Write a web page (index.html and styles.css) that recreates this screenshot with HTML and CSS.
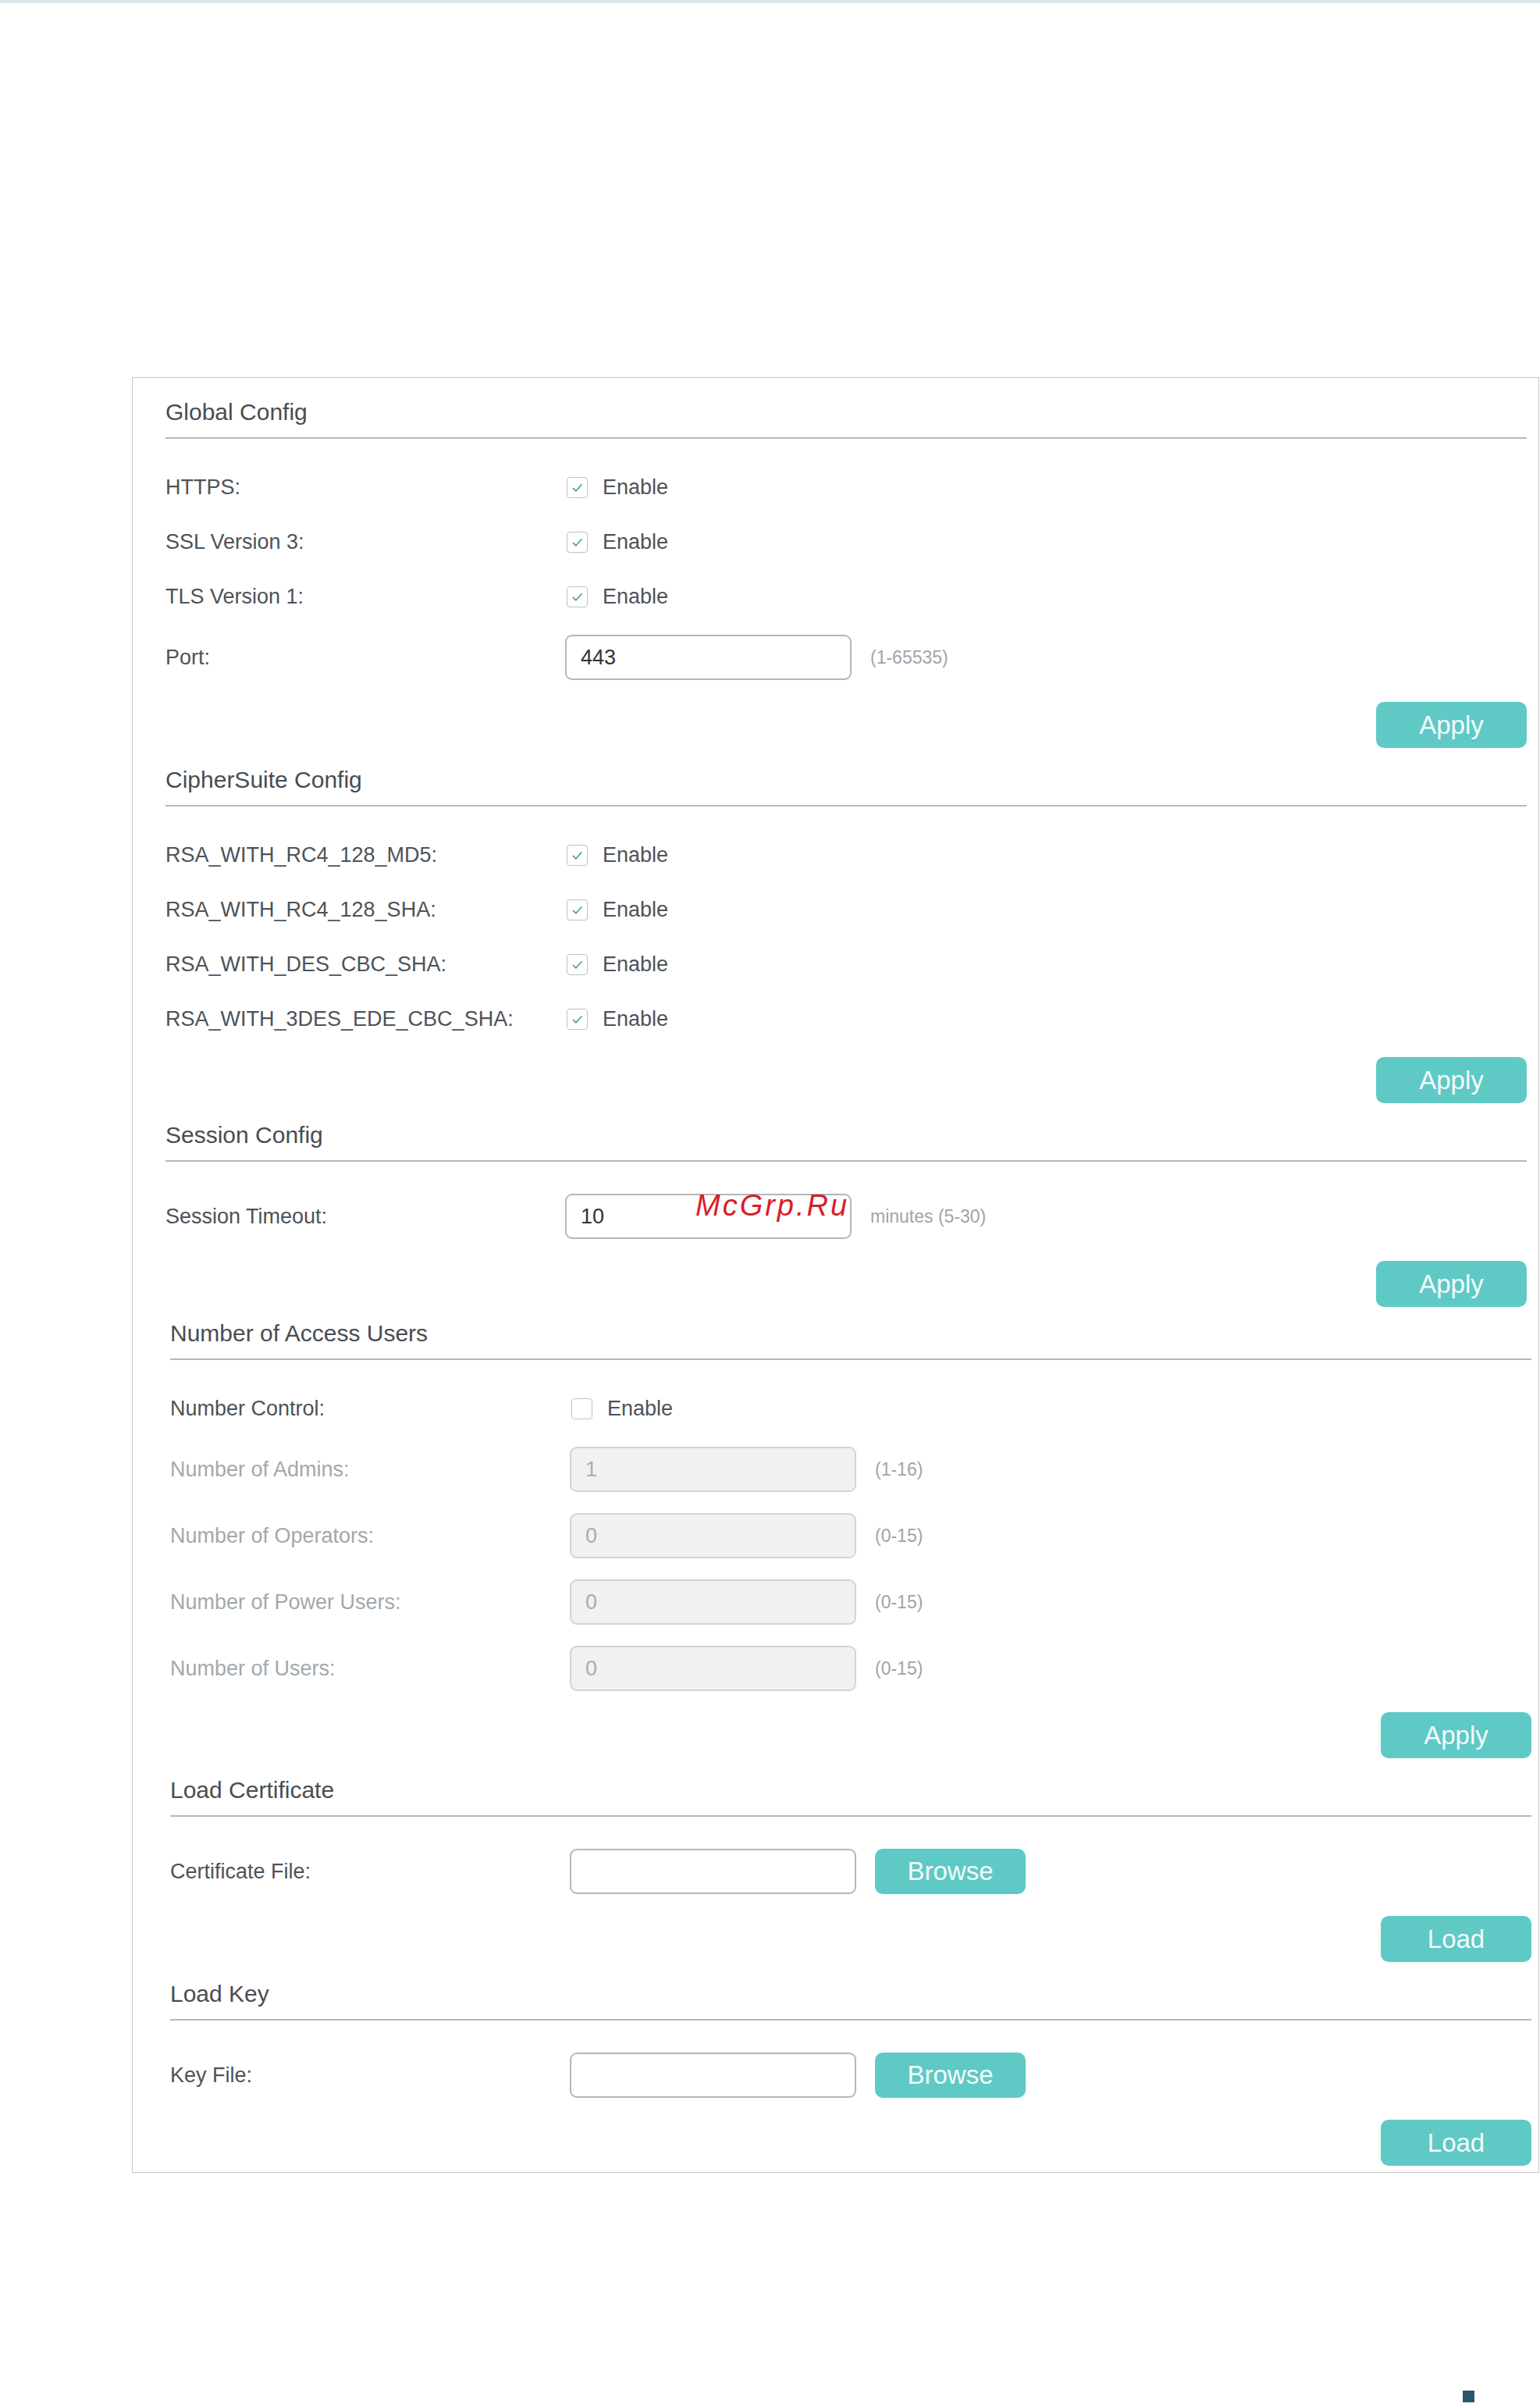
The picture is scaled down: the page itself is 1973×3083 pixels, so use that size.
FILE: index.html
```html
<!DOCTYPE html>
<html lang="en">
<head>
<meta charset="utf-8">
<title>HTTPS Config</title>
<link rel="stylesheet" href="styles.css">
</head>
<body>
<div class="topbar"></div>
<div class="page">
  <div class="panel">
    <div class="group">
      <section class="sec">
        <h2 class="sec-head">Global Config</h2>
        <div class="row row-check">
          <span class="label">HTTPS:</span>
          <span class="cb checked"><svg viewBox="0 0 27 27"><path d="M8 14.5 L11.8 18.2 L19.5 9.5"/></svg></span><span class="cb-text">Enable</span>
        </div>
        <div class="row row-check">
          <span class="label">SSL Version 3:</span>
          <span class="cb checked"><svg viewBox="0 0 27 27"><path d="M8 14.5 L11.8 18.2 L19.5 9.5"/></svg></span><span class="cb-text">Enable</span>
        </div>
        <div class="row row-check">
          <span class="label">TLS Version 1:</span>
          <span class="cb checked"><svg viewBox="0 0 27 27"><path d="M8 14.5 L11.8 18.2 L19.5 9.5"/></svg></span><span class="cb-text">Enable</span>
        </div>
        <div class="row">
          <span class="label">Port:</span>
          <span class="field">443</span><span class="hint">(1-65535)</span>
        </div>
        <div class="actions"><button class="btn">Apply</button></div>
      </section>

      <section class="sec">
        <h2 class="sec-head">CipherSuite Config</h2>
        <div class="row row-check">
          <span class="label">RSA_WITH_RC4_128_MD5:</span>
          <span class="cb checked"><svg viewBox="0 0 27 27"><path d="M8 14.5 L11.8 18.2 L19.5 9.5"/></svg></span><span class="cb-text">Enable</span>
        </div>
        <div class="row row-check">
          <span class="label">RSA_WITH_RC4_128_SHA:</span>
          <span class="cb checked"><svg viewBox="0 0 27 27"><path d="M8 14.5 L11.8 18.2 L19.5 9.5"/></svg></span><span class="cb-text">Enable</span>
        </div>
        <div class="row row-check">
          <span class="label">RSA_WITH_DES_CBC_SHA:</span>
          <span class="cb checked"><svg viewBox="0 0 27 27"><path d="M8 14.5 L11.8 18.2 L19.5 9.5"/></svg></span><span class="cb-text">Enable</span>
        </div>
        <div class="row row-check">
          <span class="label">RSA_WITH_3DES_EDE_CBC_SHA:</span>
          <span class="cb checked"><svg viewBox="0 0 27 27"><path d="M8 14.5 L11.8 18.2 L19.5 9.5"/></svg></span><span class="cb-text">Enable</span>
        </div>
        <div class="actions"><button class="btn">Apply</button></div>
      </section>

      <section class="sec">
        <h2 class="sec-head">Session Config</h2>
        <div class="row">
          <span class="label">Session Timeout:</span>
          <span class="field">10</span><span class="hint">minutes (5-30)</span>
        </div>
        <div class="actions"><button class="btn">Apply</button></div>
      </section>
    </div>

    <div class="group group-shift">
      <section class="sec">
        <h2 class="sec-head">Number of Access Users</h2>
        <div class="row row-check">
          <span class="label">Number Control:</span>
          <span class="cb"></span><span class="cb-text">Enable</span>
        </div>
        <div class="row row-disabled">
          <span class="label">Number of Admins:</span>
          <span class="field field-disabled">1</span><span class="hint">(1-16)</span>
        </div>
        <div class="row row-disabled">
          <span class="label">Number of Operators:</span>
          <span class="field field-disabled">0</span><span class="hint">(0-15)</span>
        </div>
        <div class="row row-disabled">
          <span class="label">Number of Power Users:</span>
          <span class="field field-disabled">0</span><span class="hint">(0-15)</span>
        </div>
        <div class="row row-disabled">
          <span class="label">Number of Users:</span>
          <span class="field field-disabled">0</span><span class="hint">(0-15)</span>
        </div>
        <div class="actions"><button class="btn">Apply</button></div>
      </section>

      <section class="sec">
        <h2 class="sec-head">Load Certificate</h2>
        <div class="row">
          <span class="label">Certificate File:</span>
          <span class="field"></span><button class="btn btn-browse">Browse</button>
        </div>
        <div class="actions"><button class="btn">Load</button></div>
      </section>

      <section class="sec sec-last">
        <h2 class="sec-head">Load Key</h2>
        <div class="row">
          <span class="label">Key File:</span>
          <span class="field"></span><button class="btn btn-browse">Browse</button>
        </div>
        <div class="actions"><button class="btn">Load</button></div>
      </section>
    </div>
  </div>

  <div class="watermark">McGrp.Ru</div>

  <div class="footer"><span class="footer-mark"></span></div>
</div>
</body>
</html>
```

FILE: styles.css
```css
* { box-sizing: border-box; }

html, body {
  margin: 0;
  padding: 0;
  background: #ffffff;
}

body {
  font-family: "Liberation Sans", Arial, sans-serif;
  color: #4d5358;
}

.topbar {
  height: 4px;
  background: #dbe5ea;
}

.page {
  position: relative;
  padding-top: 479px;
}

.panel {
  margin-left: 169px;
  width: 1803px;
  border: 1px solid #c6c6c6;
  padding-bottom: 8px;
}

.group {
  margin: 0 15px 0 42px;
}

.group-shift {
  margin: -10px 9px 0 48px;
}

.sec-head {
  margin: 0 0 41px 0;
  padding: 26px 0 14px 0;
  font-size: 30px;
  line-height: 36px;
  font-weight: normal;
  color: #484d52;
  border-bottom: 2px solid #b3b9bd;
}

.sec + .sec .sec-head {
  padding-top: 23px;
}

.row {
  display: flex;
  align-items: center;
  min-height: 58px;
  margin-bottom: 28px;
  font-size: 27px;
}

.row-check {
  min-height: 42px;
}

.row-disabled {
  margin-bottom: 27px;
}

.label {
  width: 512px;
  flex: none;
  color: #4d5358;
}

.row-disabled .label {
  color: #a3a8ad;
}

.cb {
  width: 27px;
  height: 27px;
  flex: none;
  border: 1.5px solid #bcc1c5;
  border-radius: 4px;
  margin: 0 19px 0 2px;
  display: inline-flex;
}

.cb svg {
  width: 100%;
  height: 100%;
}

.cb svg path {
  fill: none;
  stroke: #3a9ea0;
  stroke-width: 1.7;
  stroke-linecap: round;
  stroke-linejoin: round;
}

.cb-text {
  color: #4d5358;
}

.field {
  width: 367px;
  height: 58px;
  flex: none;
  border: 2px solid #b2b7bb;
  border-radius: 9px;
  padding-left: 18px;
  display: flex;
  align-items: center;
  color: #333333;
  font-size: 27px;
}

.field-disabled {
  background: #f1f1f1;
  border-color: #d2d4d6;
  color: #a9adb1;
}

.hint {
  margin-left: 24px;
  font-size: 23px;
  color: #a0a4a8;
}

.actions {
  display: flex;
  justify-content: flex-end;
}

.btn {
  width: 193px;
  height: 59px;
  border: none;
  border-radius: 10px;
  background: #5fc9c5;
  color: #f4fbfb;
  font-family: "Liberation Sans", Arial, sans-serif;
  font-size: 33px;
  padding: 0;
  cursor: pointer;
}

.btn-browse {
  margin-left: 24px;
  height: 58px;
}

.watermark {
  position: absolute;
  left: 891px;
  top: 1520px;
  font-family: "Liberation Sans", Arial, sans-serif;
  font-style: italic;
  font-size: 38px;
  letter-spacing: 3px;
  color: #d81e27;
  line-height: 40px;
}

.footer {
  display: flex;
  justify-content: flex-end;
  padding: 279px 84px 4px 0;
}

.footer-mark {
  width: 15px;
  height: 15px;
  background: #2c566a;
}
```
